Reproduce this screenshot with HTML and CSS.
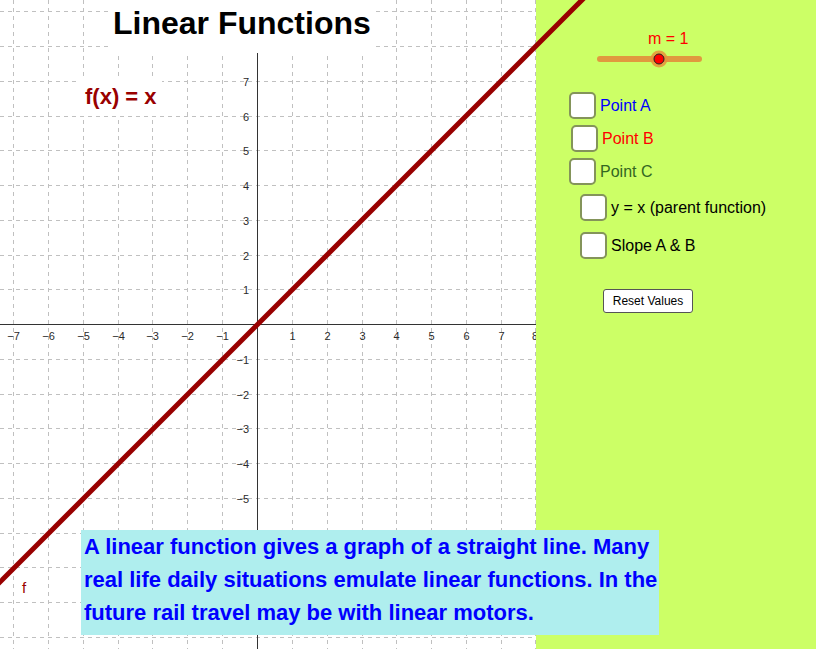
FILE: index.html
```html
<!DOCTYPE html>
<html lang="en">
<head>
  <meta charset="UTF-8">
  <title>Linear Functions</title>
  <link rel="stylesheet" href="styles.css">
</head>
<body>
  <div class="applet">

    <!-- Graphics view -->
    <div class="graph">
      <svg class="grid" width="536" height="649" viewBox="0 0 536 649">
        <path class="grid-lines" d="
          M13.5 0V649 M48.5 0V649 M83.5 0V649 M118.5 0V649 M152.5 0V649 M187.5 0V649 M222.5 0V649
          M292.5 0V649 M327.5 0V649 M362.5 0V649 M396.5 0V649 M431.5 0V649 M466.5 0V649 M501.5 0V649 M535.5 0V649
          M0 11.5H536 M0 46.5H536 M0 81.5H536 M0 116.5H536 M0 150.5H536 M0 185.5H536 M0 220.5H536 M0 255.5H536 M0 289.5H536
          M0 359.5H536 M0 394.5H536 M0 428.5H536 M0 463.5H536 M0 498.5H536 M0 533.5H536 M0 567.5H536 M0 602.5H536 M0 637.5H536" />
        <path class="axis" d="M0 324.5H536 M257.5 0V649" />

        <g class="x-labels">
          <text x="13.5" y="339.5">&#8722;7</text>
          <text x="48.5" y="339.5">&#8722;6</text>
          <text x="83.5" y="339.5">&#8722;5</text>
          <text x="118.5" y="339.5">&#8722;4</text>
          <text x="152.5" y="339.5">&#8722;3</text>
          <text x="187.5" y="339.5">&#8722;2</text>
          <text x="222.5" y="339.5">&#8722;1</text>
          <text x="292.5" y="339.5">1</text>
          <text x="327.5" y="339.5">2</text>
          <text x="362.5" y="339.5">3</text>
          <text x="396.5" y="339.5">4</text>
          <text x="431.5" y="339.5">5</text>
          <text x="466.5" y="339.5">6</text>
          <text x="501.5" y="339.5">7</text>
          <text x="535" y="339.5">8</text>
        </g>
        <g class="y-labels">
          <text x="249" y="85.5">7</text>
          <text x="249" y="120.5">6</text>
          <text x="249" y="154.5">5</text>
          <text x="249" y="189.5">4</text>
          <text x="249" y="224.5">3</text>
          <text x="249" y="259.5">2</text>
          <text x="249" y="293.5">1</text>
          <text x="249" y="363.5">&#8722;1</text>
          <text x="249" y="398.5">&#8722;2</text>
          <text x="249" y="432.5">&#8722;3</text>
          <text x="249" y="467.5">&#8722;4</text>
          <text x="249" y="502.5">&#8722;5</text>
        </g>

        <text class="f-name" x="22" y="593">f</text>
      </svg>

      <h1 class="title">Linear Functions</h1>
      <div class="fx-label">f(x) = x</div>
      <p class="note">A linear function gives a graph of a straight line. Many<br>real life daily situations emulate linear functions. In the<br>future rail travel may be with linear motors.</p>
    </div>

    <!-- Controls -->
    <div class="panel">
      <div class="slider-caption">m = 1</div>
      <svg class="slider" width="140" height="20" viewBox="0 0 140 20">
        <line class="slider-track" x1="14" y1="10" x2="113" y2="10" />
        <circle class="slider-halo" cx="73" cy="10" r="8.5" />
        <circle class="slider-knob" cx="73" cy="10" r="5" />
      </svg>

      <label class="check check-a"><span class="box"></span>Point A</label>
      <label class="check check-b"><span class="box"></span>Point B</label>
      <label class="check check-c"><span class="box"></span>Point C</label>
      <label class="check check-parent"><span class="box"></span>y = x (parent function)</label>
      <label class="check check-slope"><span class="box"></span>Slope A &amp; B</label>

      <button class="reset">Reset Values</button>
    </div>

    <!-- f is drawn over both views -->
    <svg class="curve" width="816" height="649" viewBox="0 0 816 649">
      <line x1="-10" y1="592" x2="592" y2="-10" />
    </svg>

  </div>
</body>
</html>
```

FILE: styles.css
```css
/* Reset */
* {
  margin: 0;
  padding: 0;
  box-sizing: border-box;
}

html, body {
  width: 816px;
  height: 649px;
  overflow: hidden;
  font-family: "Liberation Sans", Arial, sans-serif;
}

/* Whole applet: graph on the left, controls on the right */
.applet {
  position: relative;
  display: flex;
  width: 816px;
  height: 649px;
}

/* Graphics view */
.graph {
  position: relative;
  width: 536px;
  flex-shrink: 0;
  background-color: #fff;
}

.grid {
  display: block;
}

.grid-lines {
  fill: none;
  stroke: #c0c0c0;
  stroke-width: 1;
  stroke-dasharray: 4 4;
  shape-rendering: crispEdges;
}

.axis {
  fill: none;
  stroke: #333;
  stroke-width: 1;
  shape-rendering: crispEdges;
}

.grid text {
  font-family: "Liberation Sans", Arial, sans-serif;
  font-size: 11px;
  fill: #2a2a2a;
}

.x-labels text {
  text-anchor: middle;
}

.y-labels text {
  text-anchor: end;
}

.grid .f-name {
  font-size: 15px;
  fill: #990000;
}

/* Text objects on the graph */
.title {
  position: absolute;
  left: 110px;
  top: 0;
  width: 264px;
  height: 53px;
  padding: 5px 0 0 3px;
  background-color: #fff;
  color: #000;
  font-size: 32px;
  line-height: 36px;
  font-weight: bold;
}

.fx-label {
  position: absolute;
  left: 78px;
  top: 78px;
  width: 84px;
  height: 38px;
  padding-left: 7px;
  background-color: #fff;
  color: #990000;
  font-size: 22px;
  line-height: 38px;
  font-weight: bold;
}

.note {
  position: absolute;
  left: 81px;
  top: 530px;
  width: 578px;
  height: 105px;
  padding-left: 3px;
  background-color: #afeeee;
  color: #0000ff;
  font-size: 22px;
  line-height: 33px;
  font-weight: bold;
  white-space: nowrap;
  z-index: 1;
}

/* Controls panel */
.panel {
  flex: 1;
  background-color: #ccff66;
  padding-top: 30px;
}

.slider-caption {
  margin-left: 112px;
  color: #ff0000;
  font-size: 16px;
  line-height: 18px;
}

.slider {
  display: block;
  margin: 1px 0 0 50px;
}

.slider-track {
  stroke: #e0993f;
  stroke-width: 6;
  stroke-linecap: round;
}

.slider-halo {
  fill: #e8923a;
  opacity: 0.85;
}

.slider-knob {
  fill: #ff0000;
  stroke: #222;
  stroke-width: 1;
}

/* Check boxes */
.check {
  display: flex;
  align-items: center;
  gap: 4px;
  font-size: 16px;
  color: #000;
}

.box {
  width: 27px;
  height: 27px;
  flex-shrink: 0;
  background-color: #fff;
  border: 2px solid #84945a;
  border-radius: 5px;
}

.check-a {
  margin: 23px 0 0 33px;
  color: #0000ff;
}

.check-b {
  margin: 6px 0 0 35px;
  color: #ff0000;
}

.check-c {
  margin: 6px 0 0 33px;
  color: #336622;
}

.check-parent {
  margin: 9px 0 0 44px;
}

.check-slope {
  margin: 11px 0 0 44px;
}

/* Button */
.reset {
  display: block;
  width: 90px;
  height: 24px;
  margin: 30px 0 0 67px;
  background-color: #fff;
  border: 1px solid #555;
  border-radius: 3px;
  color: #000;
  font-family: "Liberation Sans", Arial, sans-serif;
  font-size: 12px;
}

/* Function graph over everything */
.curve {
  position: absolute;
  left: 0;
  top: 0;
  pointer-events: none;
  z-index: 2;
}

.curve line {
  stroke: #990000;
  stroke-width: 5;
}
```
